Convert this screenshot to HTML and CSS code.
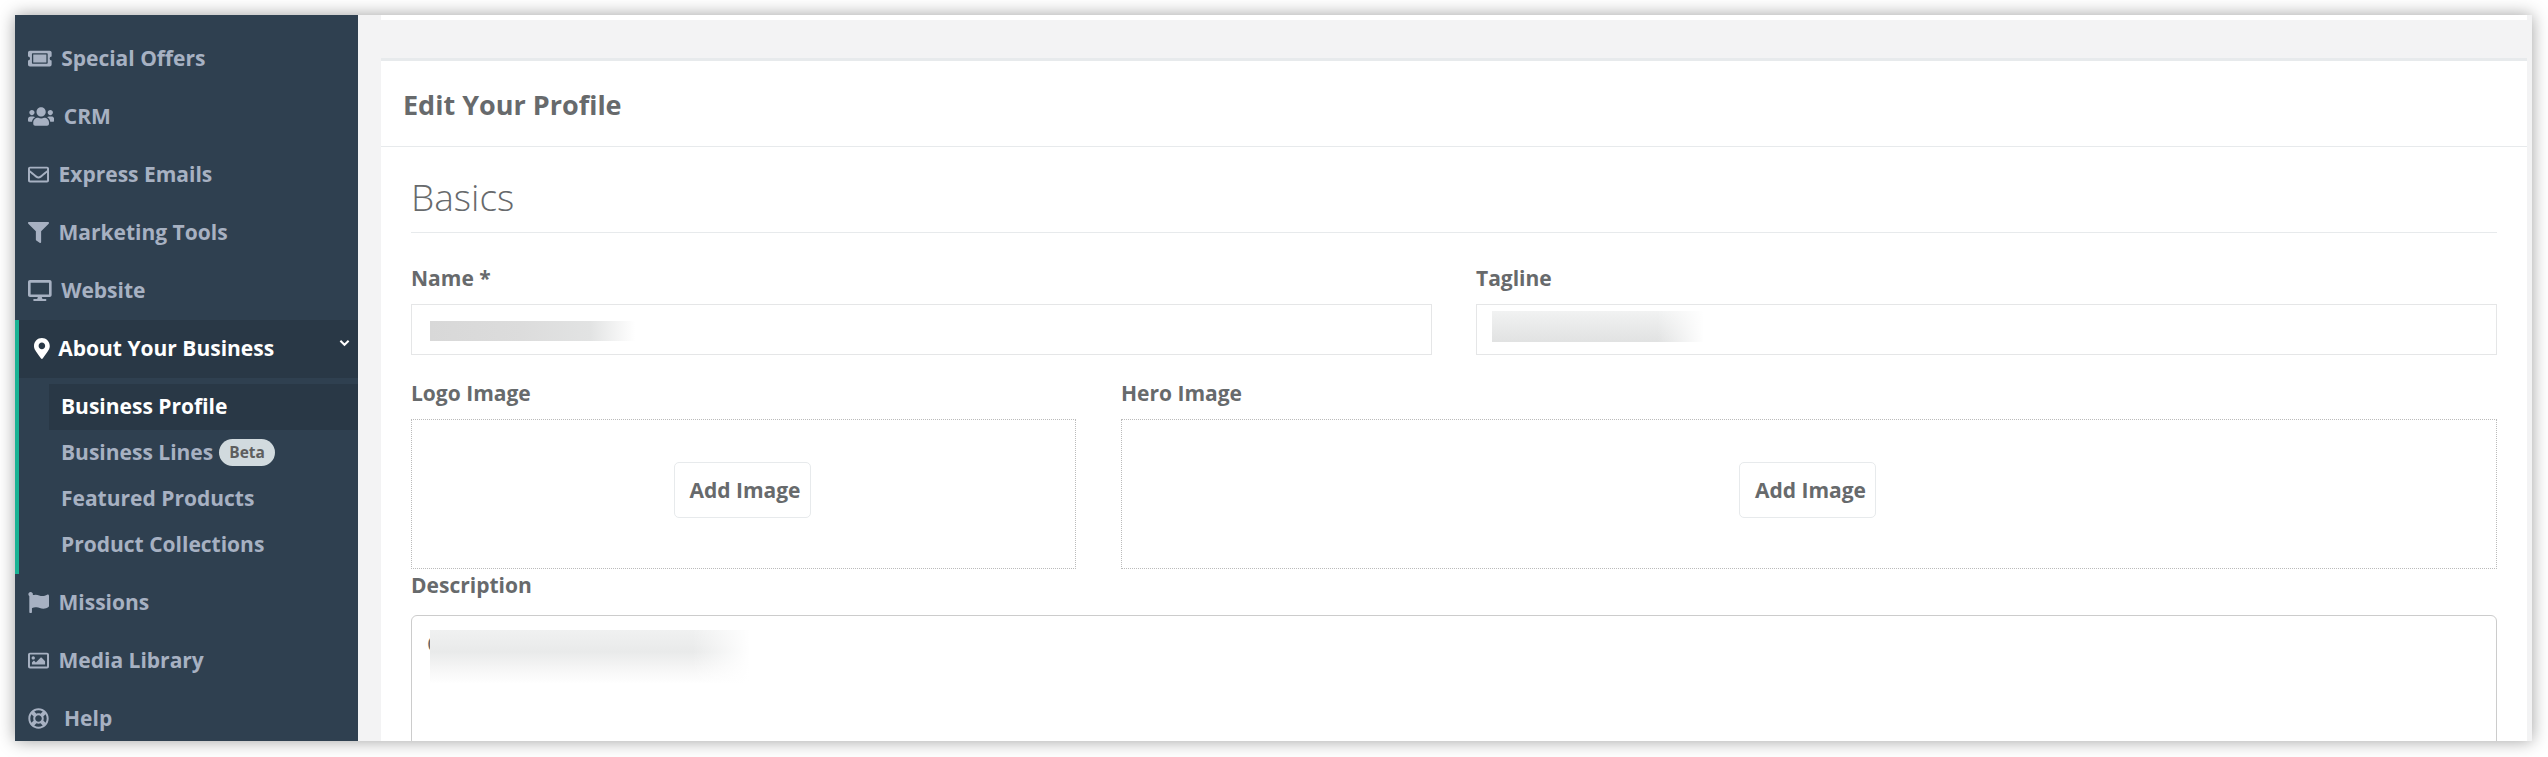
FILE: index.html
```html
<!DOCTYPE html>
<html lang="en">
<head>
<meta charset="utf-8">
<title>Edit Your Profile</title>
<link rel="stylesheet" href="styles.css">
</head>
<body>
<div class="window">
  <nav class="sidebar">
    <a class="nav-item"><svg class="ico" viewBox="0 0 576 512"><path d="M128 160h320v192H128V160zm400 96c0 26.51 21.49 48 48 48v96c0 26.51-21.49 48-48 48H48c-26.51 0-48-21.49-48-48v-96c26.51 0 48-21.49 48-48s-21.49-48-48-48v-96c0-26.51 21.49-48 48-48h480c26.51 0 48 21.49 48 48v96c-26.51 0-48 21.49-48 48zm-48-104c0-13.255-10.745-24-24-24H120c-13.255 0-24 10.745-24 24v208c0 13.255 10.745 24 24 24h336c13.255 0 24-10.745 24-24V152z"/></svg><span>Special Offers</span></a>
    <a class="nav-item"><svg class="ico" viewBox="0 0 640 512"><path d="M96 224c35.3 0 64-28.7 64-64s-28.7-64-64-64-64 28.7-64 64 28.7 64 64 64zm448 0c35.3 0 64-28.7 64-64s-28.7-64-64-64-64 28.7-64 64 28.7 64 64 64zm32 32h-64c-17.6 0-33.5 7.1-45.1 18.6 40.3 22.1 68.9 62 75.1 109.4h66c17.7 0 32-14.3 32-32v-32c0-35.3-28.7-64-64-64zm-256 0c61.9 0 112-50.1 112-112S381.9 32 320 32 208 82.1 208 144s50.1 112 112 112zm76.8 32h-8.3c-20.8 10-43.9 16-68.5 16s-47.6-6-68.5-16h-8.3C179.6 288 128 339.6 128 403.2V432c0 26.5 21.5 48 48 48h288c26.5 0 48-21.5 48-48v-28.8c0-63.6-51.6-115.2-115.2-115.2zm-223.7-13.4C161.5 263.1 145.6 256 128 256H64c-35.3 0-64 28.7-64 64v32c0 17.7 14.3 32 32 32h65.9c6.3-47.4 34.9-87.3 75.2-109.4z"/></svg><span>CRM</span></a>
    <a class="nav-item"><svg class="ico" viewBox="0 0 512 512"><path d="M464 64H48C21.49 64 0 85.49 0 112v288c0 26.51 21.49 48 48 48h416c26.51 0 48-21.49 48-48V112c0-26.51-21.49-48-48-48zm0 48v40.805c-22.422 18.259-58.168 46.651-134.587 106.49-16.841 13.247-50.201 45.072-73.413 44.701-23.208.375-56.579-31.459-73.413-44.701C106.18 199.465 70.425 171.067 48 152.805V112h416zM48 400V214.398c22.914 18.251 55.409 43.862 104.938 82.646 21.857 17.205 60.134 55.186 103.062 54.955 42.717.231 80.509-37.199 103.053-54.947 49.528-38.783 82.032-64.401 104.947-82.653V400H48z"/></svg><span>Express Emails</span></a>
    <a class="nav-item"><svg class="ico" viewBox="0 0 512 512"><path d="M487.976 0H24.028C2.71 0-8.047 25.866 7.058 40.971L192 225.941V432c0 7.831 3.821 15.17 10.237 19.662l80 55.98C298.02 518.69 320 507.493 320 487.98V225.941l184.947-184.97C520.021 25.896 509.338 0 487.976 0z"/></svg><span>Marketing Tools</span></a>
    <a class="nav-item"><svg class="ico" viewBox="0 0 576 512"><path d="M528 0H48C21.5 0 0 21.5 0 48v320c0 26.5 21.5 48 48 48h192l-16 48h-72c-13.3 0-24 10.7-24 24s10.7 24 24 24h272c13.3 0 24-10.7 24-24s-10.7-24-24-24h-72l-16-48h192c26.5 0 48-21.5 48-48V48c0-26.5-21.5-48-48-48zm-16 352H64V64h448v288z"/></svg><span>Website</span></a>
    <div class="nav-group">
      <a class="nav-item nav-head"><svg class="ico ico-pin" viewBox="0 0 384 512"><path d="M172.268 501.67C26.97 291.031 0 269.413 0 192 0 85.961 85.961 0 192 0s192 85.961 192 192c0 77.413-26.97 99.031-172.268 309.67-9.535 13.774-29.93 13.773-39.464 0zM192 272c44.183 0 80-35.817 80-80s-35.817-80-80-80-80 35.817-80 80 35.817 80 80 80z"/></svg><span>About Your Business</span><svg class="chev" viewBox="0 0 12 8"><path d="M1.5 1.5 6 6l4.5-4.5"/></svg></a>
      <div class="sub">
        <a class="sub-item sub-active">Business Profile</a>
        <a class="sub-item">Business Lines <span class="badge">Beta</span></a>
        <a class="sub-item">Featured Products</a>
        <a class="sub-item">Product Collections</a>
      </div>
    </div>
    <a class="nav-item"><svg class="ico" viewBox="0 0 512 512"><path d="M349.565 98.783C295.978 98.783 251.721 64 184.348 64c-24.955 0-47.309 4.384-68.045 12.013a55.947 55.947 0 0 0 3.586-23.562C118.117 24.015 94.806 1.206 66.338.048 34.345-1.254 8 24.296 8 56c0 19.026 9.497 35.825 24 45.945V488c0 13.255 10.745 24 24 24h16c13.255 0 24-10.745 24-24v-94.4c28.311-12.064 63.582-22.122 114.435-22.122 53.588 0 97.844 34.783 165.217 34.783 48.169 0 86.667-16.294 122.505-40.858C506.84 359.452 512 349.571 512 339.045v-243.1c0-23.393-24.269-38.87-45.485-29.016-34.338 15.948-76.454 31.854-116.95 31.854z"/></svg><span>Missions</span></a>
    <a class="nav-item"><svg class="ico" viewBox="0 0 512 512"><path d="M464 64H48C21.49 64 0 85.49 0 112v288c0 26.51 21.49 48 48 48h416c26.51 0 48-21.49 48-48V112c0-26.51-21.49-48-48-48zm-6 336H54a6 6 0 0 1-6-6V118a6 6 0 0 1 6-6h404a6 6 0 0 1 6 6v276a6 6 0 0 1-6 6zM128 152c-22.091 0-40 17.909-40 40s17.909 40 40 40 40-17.909 40-40-17.909-40-40-40zM96 352h320v-80l-87.515-87.515c-4.686-4.686-12.284-4.686-16.971 0L192 304l-39.515-39.515c-4.686-4.686-12.284-4.686-16.971 0L96 304v48z"/></svg><span>Media Library</span></a>
    <a class="nav-item nav-help"><svg class="ico" viewBox="0 0 512 512"><path d="M256 504c136.967 0 248-111.033 248-248S392.967 8 256 8 8 119.033 8 256s111.033 248 248 248zm-103.398-76.72l53.411-53.411c31.806 13.506 68.128 13.522 99.974 0l53.411 53.411c-63.217 38.319-143.579 38.319-206.796 0zM336 256c0 44.112-35.888 80-80 80s-80-35.888-80-80 35.888-80 80-80 80 35.888 80 80zm91.28 103.398l-53.411-53.411c13.505-31.806 13.522-68.128 0-99.974l53.411-53.411c38.319 63.217 38.319 143.579 0 206.796zM359.397 84.72l-53.411 53.411c-31.806-13.505-68.128-13.522-99.973 0L152.602 84.72c63.217-38.319 143.579-38.319 206.795 0zM84.72 152.602l53.411 53.411c-13.506 31.806-13.522 68.128 0 99.974L84.72 359.398c-38.319-63.217-38.319-143.579 0-206.796z"/></svg><span>Help</span></a>
  </nav>
  <main class="main">
    <div class="top-strip"></div>
    <div class="top-bar"></div>
    <section class="panel">
      <h2 class="panel-title">Edit Your Profile</h2>
      <div class="panel-body">
        <h3 class="section-head">Basics</h3>
        <div class="row-two">
          <div class="field">
            <label class="label">Name *</label>
            <div class="input"><div class="blur blur-name"></div></div>
          </div>
          <div class="field">
            <label class="label">Tagline</label>
            <div class="input input-tag"><div class="blur blur-tag"></div></div>
          </div>
        </div>
        <div class="row-images">
          <div class="field">
            <label class="label">Logo Image</label>
            <div class="dropzone"><button class="btn">Add Image</button></div>
          </div>
          <div class="field">
            <label class="label">Hero Image</label>
            <div class="dropzone"><button class="btn">Add Image</button></div>
          </div>
        </div>
        <div class="field field-desc">
          <label class="label">Description</label>
          <div class="textarea">C<div class="blur blur-desc"></div></div>
        </div>
      </div>
    </section>
  </main>
</div>
</body>
</html>
```
FILE: styles.css
```css
* { box-sizing: border-box; }
html, body { margin: 0; height: 100%; background: #fff; overflow: hidden; }
body {
  padding: 15px 16px 16px 15px;
  font-family: "Open Sans", sans-serif;
  color: #676a6c;
}
.window {
  display: flex;
  height: 726px;
  overflow: hidden;
  box-shadow: 0 0 16px rgba(0, 0, 0, .38);
}
.sidebar {
  flex: 0 0 343px;
  background: #2f4050;
  padding-top: 14px;
  color: #a7b1c2;
  font-weight: 700;
  font-size: 21px;
}
.nav-item {
  display: flex;
  align-items: center;
  height: 58px;
  padding-left: 13px;
  gap: 9.5px;
}
.ico { height: 21px; flex: none; fill: currentColor; }
.nav-help { gap: 15px; }
.nav-group {
  position: relative;
  border-left: 4px solid #1ab394;
  height: 254px;
  margin-top: 1px;
  margin-bottom: -1px;
}
.nav-head {
  background: #293846;
  color: #fff;
  padding-left: 15px;
  padding-bottom: 2px;
  height: 58px;
}
.ico-pin { margin-right: -1px; }
.chev {
  position: absolute;
  right: 8px;
  top: 19px;
  width: 11px;
  height: 8px;
  fill: none;
  stroke: #fff;
  stroke-width: 2.2;
}
.sub { padding-top: 6px; }
.sub-item {
  display: flex;
  align-items: center;
  height: 46px;
  margin-left: 30px;
  padding-left: 12px;
  padding-bottom: 2px;
  gap: 6px;
}
.sub-active { background: #293846; color: #fff; }
.badge {
  background: #d1dade;
  color: #5e5e5e;
  font-size: 15.5px;
  line-height: 27px;
  height: 27px;
  padding: 0 10px;
  border-radius: 14px;
}
.main {
  flex: 1;
  min-width: 0;
  background: #f3f3f4;
  padding: 0 5px 0 23px;
}
.top-strip { height: 5px; background: #fff; }
.top-bar { height: 41px; background: #f3f3f4; border-bottom: 3px solid #e7eaec; }
.panel { background: #fff; height: 680px; }
.panel-title {
  margin: 0;
  height: 86px;
  padding: 2px 0 0 22px;
  display: flex;
  align-items: center;
  font-size: 27px;
  font-weight: 700;
  border-bottom: 1px solid #e7eaec;
}
.panel-body { padding: 0 30px; }
.section-head {
  margin: 0;
  height: 86px;
  padding-top: 25px;
  font-size: 37px;
  line-height: 50px;
  font-weight: 300;
  border-bottom: 1px solid #e7eaec;
}
.row-two {
  display: grid;
  grid-template-columns: 1fr 1fr;
  gap: 44px;
  padding-top: 31px;
}
.row-images {
  display: grid;
  grid-template-columns: 665px 1fr;
  gap: 45px;
  padding-top: 24px;
}
.label {
  display: block;
  font-size: 21px;
  font-weight: 700;
  line-height: 28px;
  height: 40px;
}
.input {
  height: 51px;
  border: 1px solid #e5e6e7;
  padding: 16px 0 0 18px;
}
.input-tag { padding: 6px 0 0 15px; }
.blur-name {
  width: 205px;
  height: 20px;
  background: linear-gradient(90deg, #d8d8d8 0, #dcdcdc 45%, #e2e3e3 78%, #fff 100%);
}
.blur-tag {
  width: 212px;
  height: 31px;
  background:
    linear-gradient(90deg, rgba(255,255,255,0) 78%, #fff 100%),
    linear-gradient(180deg, #f1f2f2, #e1e2e2);
}
.dropzone {
  height: 150px;
  border: 1px dotted #bbb;
  display: flex;
  align-items: center;
  justify-content: center;
  padding: 0 3px 8px 0;
}
.btn {
  width: 137px;
  height: 56px;
  padding: 0 0 0 6px;
  background: #fff;
  border: 1px solid #e7eaec;
  border-radius: 5px;
  font: 700 21px "Open Sans", sans-serif;
  color: #676a6c;
}
.field-desc { padding-top: 2px; }
.field-desc .label { height: 44px; }
.textarea {
  position: relative;
  height: 200px;
  border: 1px solid #ccc;
  border-radius: 6px;
  padding: 14px 0 0 15px;
  font-size: 21px;
  line-height: 28px;
}
.blur-desc {
  position: absolute;
  left: 18px;
  top: 14px;
  width: 320px;
  height: 54px;
  background:
    linear-gradient(90deg, rgba(255,255,255,0) 82%, #fff 100%),
    linear-gradient(180deg, #f0f1f1 0, #e9eaea 40%, #f6f6f6 72%, #fff 100%);
}
```
